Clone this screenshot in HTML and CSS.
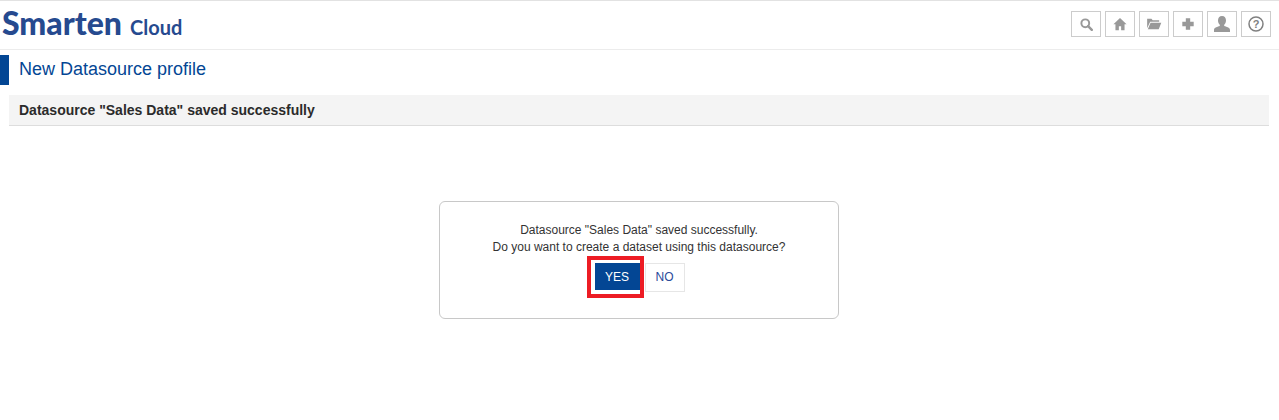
FILE: index.html
```html
<!DOCTYPE html>
<html lang="en">
<head>
<meta charset="utf-8">
<title>New Datasource profile</title>
<link rel="stylesheet" href="styles.css">
</head>
<body>
<header class="topbar">
  <div class="logo"><span class="logo-main">Smarten</span><span class="logo-sub">Cloud</span></div>
  <nav class="tools">
    <button class="tool"><svg viewBox="0 0 16 16" width="13" height="13"><circle cx="6.500" cy="6.500" r="4.800" fill="none" stroke="#999" stroke-width="2.400"/><path d="M10 10 14.500 14.500" stroke="#999" stroke-width="3" stroke-linecap="round"/></svg></button>
    <button class="tool"><svg viewBox="0 0 16 16" width="14" height="14"><path d="M8 1 0.500 8.300h2.300V15h3.900v-4.500h2.600V15h3.900V8.300h2.300z" fill="#999"/></svg></button>
    <button class="tool"><svg viewBox="0 0 18 14" width="16" height="12"><path d="M1 1h5l1.500 1.500H15V4.500H4.500L1 12z" fill="#999"/><path d="M5 5.500h12.500L14.500 13H1.800z" fill="#999"/></svg></button>
    <button class="tool"><svg viewBox="0 0 16 16" width="14" height="14"><path d="M5.500 1.500h5v4h4v5h-4v4h-5v-4h-4v-5h4z" fill="#999"/></svg></button>
    <button class="tool"><svg viewBox="0 0 18 18" width="18" height="18"><path d="M9 1c2.600 0 4 2 4 4.500 0 1.800-.8 3.400-1.800 4.300v1.200c2 .8 5.800 1.300 5.800 4V17H1V15c0-2.700 3.800-3.200 5.800-4V9.800C5.800 8.900 5 7.300 5 5.500 5 3 6.400 1 9 1z" fill="#999"/></svg></button>
    <button class="tool"><svg viewBox="0 0 16 16" width="16" height="16"><circle cx="8" cy="8" r="7" fill="none" stroke="#808080" stroke-width="1.500"/><text x="8" y="12" class="help-mark">?</text></svg></button>
  </nav>
</header>
<section class="title-row"><h1 class="title">New Datasource profile</h1></section>
<section class="panel-head">Datasource "Sales Data" saved successfully</section>
<main class="stage">
  <div class="dialog">
    <p class="msg">Datasource "Sales Data" saved successfully.<br>Do you want to create a dataset using this datasource?</p>
    <div class="actions">
      <span class="highlight"><button class="btn btn-yes">YES</button></span>
      <button class="btn btn-no">NO</button>
    </div>
  </div>
</main>
</body>
</html>
```
FILE: styles.css
```css
* { box-sizing: border-box; }
html, body { margin: 0; padding: 0; }
body { width: 1279px; height: 420px; overflow: hidden; background: #fff; font-family: "Liberation Sans", Arial, sans-serif; }
.topbar { height: 50px; border-top: 1px solid #e2e2e2; border-bottom: 1px solid #ececec; display: flex; justify-content: space-between; padding: 0 8px 0 2px; }
.logo { display: flex; align-items: baseline; color: #264a8f; font-family: Lato, sans-serif; font-weight: 900; height: 48px; }
.logo-main { font-size: 32px; line-height: 44px; }
.logo-sub { font-size: 20px; margin-left: 8px; font-weight: 700; }
.tools { display: flex; gap: 4px; padding-top: 10px; }
.tool { width: 30px; height: 26px; padding: 0; border: 1px solid #ccc; background: #fff; display: flex; align-items: center; justify-content: center; }
.help-mark { font: 700 11px "Liberation Sans", sans-serif; fill: #808080; text-anchor: middle; }
.title-row { margin-top: 5px; height: 30px; border-left: 9px solid #034694; padding-left: 10px; display: flex; align-items: center; padding-bottom: 2px; }
.title { margin: 0; font-size: 18px; font-weight: 400; color: #034694; line-height: 28px; }
.panel-head { margin: 10px 10px 0 9px; height: 31px; background: #f4f4f4; border-bottom: 1px solid #ddd; padding-left: 10px; font-size: 14px; font-weight: 700; color: #2b2b2b; line-height: 30px; }
.stage { display: flex; justify-content: center; padding: 75px 1px 0 0; }
.dialog { width: 400px; height: 118px; border: 1px solid #c8c8c8; border-radius: 6px; padding-top: 20px; text-align: center; }
.msg { margin: 0; font-size: 12px; line-height: 17px; color: #333; }
.actions { display: flex; justify-content: center; align-items: center; margin: 0 0 0 -7px; }
.highlight { border: 4px solid #ed1c24; padding: 3px 0 4px 4px; display: flex; }
.btn { font: 12px "Liberation Sans", sans-serif; padding: 0; }
.btn-yes { width: 45px; height: 27px; background: #034694; color: #fff; border: 1px solid #034694; }
.btn-no { width: 40px; height: 29px; margin-left: 1px; background: #fff; color: #2a4a9a; border: 1px solid #e6e6e6; }
```
